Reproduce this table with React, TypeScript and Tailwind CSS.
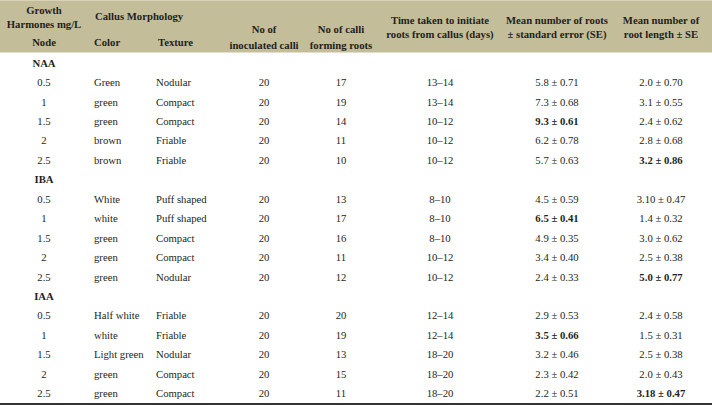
type Row = {
  node: string;
  color: string;
  texture: string;
  inoculated: string;
  forming: string;
  time: string;
  roots: string;
  rootsBold?: boolean;
  length: string;
  lengthBold?: boolean;
};

type Group = { label: string; rows: Row[] };

const GROUPS: Group[] = [
  {
    label: "NAA",
    rows: [
      { node: "0.5", color: "Green", texture: "Nodular", inoculated: "20", forming: "17", time: "13–14", roots: "5.8 ± 0.71", length: "2.0 ± 0.70" },
      { node: "1", color: "green", texture: "Compact", inoculated: "20", forming: "19", time: "13–14", roots: "7.3 ± 0.68", length: "3.1 ± 0.55" },
      { node: "1.5", color: "green", texture: "Compact", inoculated: "20", forming: "14", time: "10–12", roots: "9.3 ± 0.61", rootsBold: true, length: "2.4 ± 0.62" },
      { node: "2", color: "brown", texture: "Friable", inoculated: "20", forming: "11", time: "10–12", roots: "6.2 ± 0.78", length: "2.8 ± 0.68" },
      { node: "2.5", color: "brown", texture: "Friable", inoculated: "20", forming: "10", time: "10–12", roots: "5.7 ± 0.63", length: "3.2 ± 0.86", lengthBold: true },
    ],
  },
  {
    label: "IBA",
    rows: [
      { node: "0.5", color: "White", texture: "Puff shaped", inoculated: "20", forming: "13", time: "8–10", roots: "4.5 ± 0.59", length: "3.10 ± 0.47" },
      { node: "1", color: "white", texture: "Puff shaped", inoculated: "20", forming: "17", time: "8–10", roots: "6.5 ± 0.41", rootsBold: true, length: "1.4 ± 0.32" },
      { node: "1.5", color: "green", texture: "Compact", inoculated: "20", forming: "16", time: "8–10", roots: "4.9 ± 0.35", length: "3.0 ± 0.62" },
      { node: "2", color: "green", texture: "Compact", inoculated: "20", forming: "11", time: "10–12", roots: "3.4 ± 0.40", length: "2.5 ± 0.38" },
      { node: "2.5", color: "green", texture: "Nodular", inoculated: "20", forming: "12", time: "10–12", roots: "2.4 ± 0.33", length: "5.0 ± 0.77", lengthBold: true },
    ],
  },
  {
    label: "IAA",
    rows: [
      { node: "0.5", color: "Half white", texture: "Friable", inoculated: "20", forming: "20", time: "12–14", roots: "2.9 ± 0.53", length: "2.4 ± 0.58" },
      { node: "1", color: "white", texture: "Friable", inoculated: "20", forming: "19", time: "12–14", roots: "3.5 ± 0.66", rootsBold: true, length: "1.5 ± 0.31" },
      { node: "1.5", color: "Light green", texture: "Nodular", inoculated: "20", forming: "13", time: "18–20", roots: "3.2 ± 0.46", length: "2.5 ± 0.38" },
      { node: "2", color: "green", texture: "Compact", inoculated: "20", forming: "15", time: "18–20", roots: "2.3 ± 0.42", length: "2.0 ± 0.43" },
      { node: "2.5", color: "green", texture: "Compact", inoculated: "20", forming: "11", time: "18–20", roots: "2.2 ± 0.51", length: "3.18 ± 0.47", lengthBold: true },
    ],
  },
];

const gridCls = "grid grid-cols-[88px_62px_72px_84px_70px_128px_106px_102px]";
const rowCls = `${gridCls} h-[19.45px] items-center whitespace-nowrap`;

function DataRow({ row }: { row: Row }) {
  return (
    <div className={rowCls}>
      <div className="text-center">{row.node}</div>
      <div className="pl-[6px]">{row.color}</div>
      <div className="pl-[6px]">{row.texture}</div>
      <div className="text-center">{row.inoculated}</div>
      <div className="text-center">{row.forming}</div>
      <div className="text-center">{row.time}</div>
      <div className={row.rootsBold ? "text-center font-bold" : "text-center"}>{row.roots}</div>
      <div className={row.lengthBold ? "text-center font-bold" : "text-center"}>{row.length}</div>
    </div>
  );
}

export default function App() {
  return (
    <div className="w-[712px] h-[405px] bg-white text-[#231f20] [font-family:Liberation_Serif,Times_New_Roman,serif] text-[10.7px] overflow-hidden">
      {/* Header band */}
      <div className={`${gridCls} h-[53px] bg-[#c4bd99] border-t border-[#d8d3b8] border-b border-b-[#e2dfd0] font-bold leading-[14px]`}>
        <div className="flex flex-col items-center pt-[2px] text-center whitespace-nowrap">
          <span>Growth</span>
          <span>Harmones mg/L</span>
          <span className="mt-[4px]">Node</span>
        </div>
        <div className="col-span-2 flex flex-col pt-[8px]">
          <span className="pl-[7px]">Callus Morphology</span>
          <div className="mt-[12px] grid grid-cols-[62px_72px]">
            <span className="pl-[6px]">Color</span>
            <span className="pl-[8px]">Texture</span>
          </div>
        </div>
        <div className="flex flex-col items-center pt-[20px] leading-[16px] whitespace-nowrap">
          <span>No of</span>
          <span>inoculated calli</span>
        </div>
        <div className="flex flex-col items-center pt-[20px] leading-[16px] whitespace-nowrap">
          <span>No of calli</span>
          <span>forming roots</span>
        </div>
        <div className="flex flex-col items-center pt-[12px] whitespace-nowrap">
          <span>Time taken to initiate</span>
          <span>roots from callus (days)</span>
        </div>
        <div className="flex flex-col items-center pt-[12px] whitespace-nowrap">
          <span>Mean number of roots</span>
          <span>± standard error (SE)</span>
        </div>
        <div className="flex flex-col items-center pt-[12px] whitespace-nowrap">
          <span>Mean number of</span>
          <span>root length ± SE</span>
        </div>
      </div>

      {/* Body */}
      <div className="border-b-2 border-[#333]">
        {GROUPS.map((g) => (
          <div key={g.label}>
            <div className={rowCls}>
              <div className="text-center font-bold">{g.label}</div>
            </div>
            {g.rows.map((r, i) => (
              <DataRow key={i} row={r} />
            ))}
          </div>
        ))}
      </div>
    </div>
  );
}
